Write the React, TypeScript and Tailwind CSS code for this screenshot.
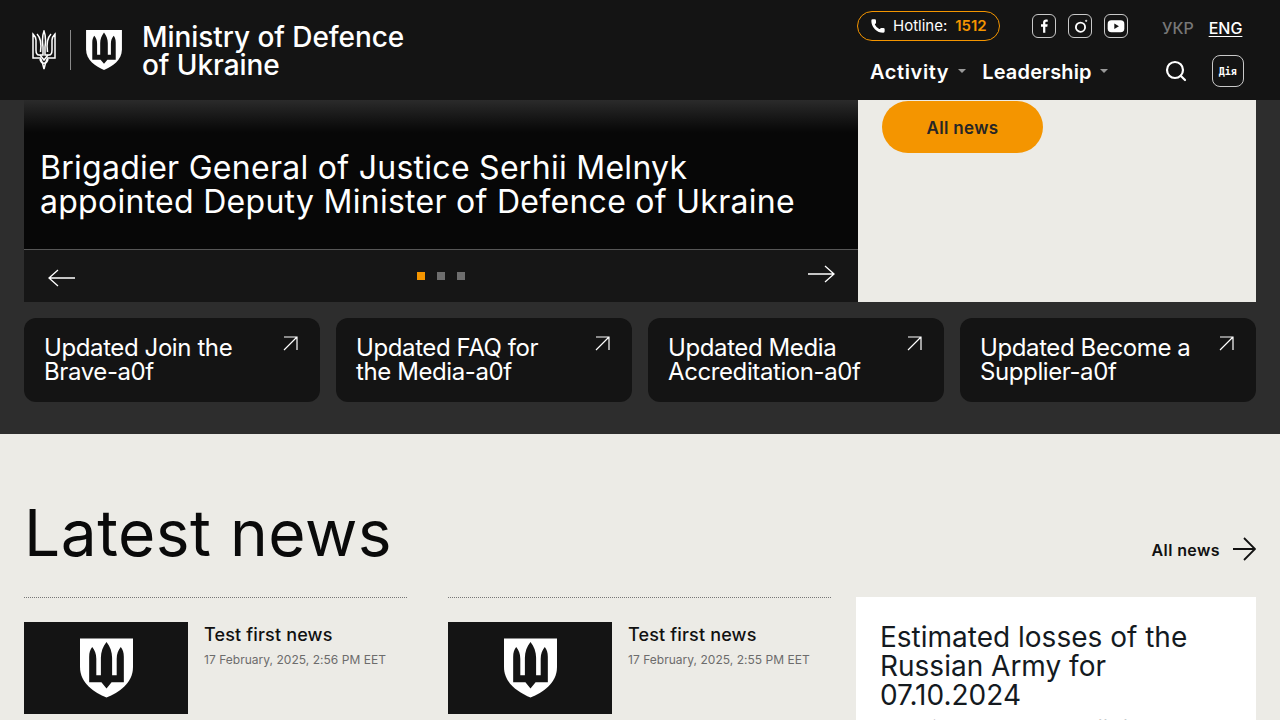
import { Phone, Search } from 'lucide-react';

const font = "font-['Inter','Liberation_Sans',sans-serif]";

function Shield({ className }: { className: string }) {
    return (
        <svg viewBox="0 0 52 58" className={className}>
            <path
                fill="#fff"
                d="M0 0H52V28C52 44 38 53 26 58C14 53 0 44 0 28Z"
            />
            <path
                fill="#141414"
                d="M26 3.500C29.500 8 31.500 13 31.500 19V36H36V20C36 15 37.500 12 40 8.500C42 11 43 14 43 18V43H31L26 49L21 43H9V18C9 14 10 11 12 8.500C14.500 12 16 15 16 20V36H20.500V19C20.500 13 22.500 8 26 3.500Z"
            />
        </svg>
    );
}

function Trident({ className }: { className: string }) {
    return (
        <svg viewBox="0 0 24 40" className={className} fill="none" stroke="#fff" strokeWidth="1.5">
            <path d="M12 1C10 6 10 10 11 17V25H7C5 25 4 23 4 20V10C4 8 3 6 1 4V28H8.500C9.500 30 10.500 32 12 39C13.500 32 14.500 30 15.500 28H23V4C21 6 20 8 20 10V20C20 23 19 25 17 25H13V17C14 10 14 6 12 1Z" />
            <path d="M5 4C9 8 9.500 15 8.500 22M19 4C15 8 14.500 15 15.500 22M8 29C9 34.500 15 34.500 16 29M8 25L12 30L16 25" />
        </svg>
    );
}

function Facebook() {
    return (
        <svg viewBox="0 0 24 24" className="h-4 w-4" fill="#fff">
            <path d="M14 22v-9h3l.5-3.5H14V7.400c0-1 .3-1.700 1.700-1.700h1.900V2.600C17.200 2.500 16.200 2.400 15 2.400c-2.600 0-4.400 1.600-4.400 4.500v2.600H7.500V13h3.100v9z" />
        </svg>
    );
}

function Instagram() {
    return (
        <svg viewBox="0 0 24 24" className="h-[17px] w-[17px]" fill="none" stroke="#fff" strokeWidth="2.600">
            <circle cx="12" cy="13" r="6.500" />
            <circle cx="20" cy="4" r="1" fill="#fff" strokeWidth="1" />
        </svg>
    );
}

function Youtube() {
    return (
        <svg viewBox="0 0 24 24" className="h-5 w-5">
            <rect x="2" y="5" width="20" height="14.500" rx="4.500" fill="#fff" />
            <path d="M10 9v6.500l5.500-3.250z" fill="#141414" />
        </svg>
    );
}

function IconBox({ children }: { children: React.ReactNode }) {
    return (
        <a className="flex h-6 w-6 items-center justify-center rounded-md border border-[#c9c9c9]">
            {children}
        </a>
    );
}

function Header() {
    return (
        <header className="flex h-[100px] shrink-0 justify-between bg-[#141414] text-white">
            <div className="flex items-center pl-8">
                <Trident className="h-10 w-6" />
                <div className="ml-[14px] h-10 w-px bg-[#8a8a8a]" />
                <Shield className="ml-[15px] h-10 w-9" />
                <div className="ml-5 mt-[2px] text-[28px] font-medium leading-[28px] tracking-[-0.06px]">
                    Ministry of Defence
                    <br />
                    of Ukraine
                </div>
            </div>
            <div className="relative w-[423px]">
                <div className="flex items-center pt-[11px]">
                    <div className="flex h-[30px] w-[143px] items-center rounded-full border border-[#f49500] pl-3 text-[15px]">
                        <Phone className="h-4 w-4 fill-white" strokeWidth={0} />
                        <span className="ml-[7px] mt-px">Hotline:</span>
                        <span className="ml-2 mt-px font-semibold text-[#f49500]">1512</span>
                    </div>
                    <div className="ml-8 flex gap-3">
                        <IconBox><Facebook /></IconBox>
                        <IconBox><Instagram /></IconBox>
                        <IconBox><Youtube /></IconBox>
                    </div>
                    <span className="ml-[34px] mt-[3px] text-base font-medium text-[#777]">УКР</span>
                    <span className="ml-[15px] mt-[3px] text-base font-medium underline underline-offset-2">ENG</span>
                </div>
                <div className="mt-[14px] flex items-center pl-[13px]">
                    <span className="mt-[2px] text-xl font-semibold tracking-[0.6px]">Activity</span>
                    <span className="ml-[9px] h-0 w-0 border-x-4 border-t-4 border-x-transparent border-t-[#999]" />
                    <span className="ml-4 mt-[2px] text-xl font-semibold tracking-[0.15px]">Leadership</span>
                    <span className="ml-2 h-0 w-0 border-x-4 border-t-4 border-x-transparent border-t-[#999]" />
                    <Search className="ml-[56px] h-6 w-6" strokeWidth={2.2} />
                    <div className="ml-6 flex h-8 w-8 items-center justify-center rounded-lg border border-[#c9c9c9] font-['DejaVu_Sans_Mono',monospace] text-[10px] font-bold">
                        Дія
                    </div>
                </div>
            </div>
        </header>
    );
}

function LongArrow({ left }: { left?: boolean }) {
    return (
        <svg viewBox="0 0 28 18" className="h-[18px] w-7" fill="none" stroke="#fff" strokeWidth="1.3">
            {left ? <path d="M27 9H1M10 1L1 9L10 17" /> : <path d="M1 9H27M18 1L27 9L18 17" />}
        </svg>
    );
}

function Slider() {
    return (
        <div className="flex h-[202px] px-6">
            <div className="flex w-[834px] flex-col bg-[#161616]">
                <div className="h-[149px] bg-gradient-to-b from-[#2b2b2b] from-0% to-[#070707] to-[22%] pl-4 pt-[51px] text-[32px] font-normal leading-[34px] tracking-[0.28px] text-white">
                    Brigadier General of Justice Serhii Melnyk
                    <br />
                    appointed Deputy Minister of Defence of Ukraine
                </div>
                <div className="relative flex flex-1 items-center justify-center border-t border-[#565656]">
                    <div className="absolute left-6 top-[19px]">
                        <LongArrow left />
                    </div>
                    <div className="mb-[1px] flex gap-3">
                        <span className="h-2 w-2 bg-[#f49500]" />
                        <span className="h-2 w-2 bg-[#6e6e6e]" />
                        <span className="h-2 w-2 bg-[#6e6e6e]" />
                    </div>
                    <div className="absolute right-[23px] top-[15px]">
                        <LongArrow />
                    </div>
                </div>
            </div>
            <div className="flex-1 bg-[#ecebe6] pl-6 pt-px">
                <a className="flex h-[52px] w-[161px] items-center justify-center rounded-full bg-[#f49500] pt-[3px] text-[17px] font-semibold tracking-[0.3px] text-[#262626]">
                    All news
                </a>
            </div>
        </div>
    );
}

const links = [
    ['Updated Join the', 'Brave-a0f'],
    ['Updated FAQ for', 'the Media-a0f'],
    ['Updated Media', 'Accreditation-a0f'],
    ['Updated Become a', 'Supplier-a0f'],
];

function QuickLinks() {
    return (
        <div className="grid grid-cols-4 gap-4 px-6 pb-8 pt-4">
            {links.map((item) => (
                <a
                    key={item[0]}
                    className="relative h-[84px] rounded-xl bg-[#141414] pl-5 pt-[18px] text-[24px] font-normal leading-6 tracking-[-0.4px] text-white"
                >
                    {item[0]}
                    <br />
                    {item[1]}
                    <svg viewBox="0 0 15 15" className="absolute right-[22px] top-[18px] h-[15px] w-[15px]" fill="none" stroke="#fff" strokeWidth="1.2">
                        <path d="M1 1H14V14M14 1L1 14" />
                    </svg>
                </a>
            ))}
        </div>
    );
}

function NewsItem({ date }: { date: string }) {
    return (
        <div className="w-[383px] border-t border-dotted border-[#777] pt-6">
            <div className="flex">
                <div className="flex h-[92px] w-[164px] items-center justify-center bg-[#141414]">
                    <Shield className="h-[60px] w-[53px]" />
                </div>
                <div className="ml-4 pt-[3px]">
                    <div className="text-[18px] font-medium leading-5 tracking-[0.15px] text-[#111]">Test first news</div>
                    <div className="mt-[7px] text-xs tracking-[0.03px] text-[#6c6c6c]">{date}</div>
                </div>
            </div>
        </div>
    );
}

function LatestNews() {
    return (
        <section className="relative px-6 pt-[63px]">
            <div className="flex items-end justify-between">
                <h2 className="text-[64px] font-normal leading-[72px] tracking-[0.5px] text-[#0a0a0a]">Latest news</h2>
                <a className="mb-[7px] flex items-center gap-3 text-[16px] font-semibold tracking-[0.4px] text-[#111]">
                    <span className="mt-[2px]">All news</span>
                    <svg viewBox="0 0 24 24" className="h-6 w-6" fill="none" stroke="#111" strokeWidth="1.8">
                        <path d="M1 12H23M12 1L23 12L12 23" />
                    </svg>
                </a>
            </div>
            <div className="mt-7 flex">
                <NewsItem date="17 February, 2025, 2:56 PM EET" />
                <div className="ml-[41px]">
                    <NewsItem date="17 February, 2025, 2:55 PM EET" />
                </div>
                <div className="ml-[25px] h-[200px] w-[400px] bg-white pl-6 pt-[26px]">
                    <div className="text-[28px] leading-[29px] text-[#141a1f]">
                        Estimated losses of the
                        <br />
                        Russian Army for
                        <br />
                        07.10.2024
                    </div>
                    <div className="mt-1 text-base text-[#141a1f]">according to the General Staff of the</div>
                </div>
            </div>
        </section>
    );
}

export default function App() {
    return (
        <div className={`flex h-screen flex-col overflow-hidden bg-[#ecebe6] ${font}`}>
            <Header />
            <div className="bg-[#2d2d2d]">
                <Slider />
                <QuickLinks />
            </div>
            <LatestNews />
        </div>
    );
}
